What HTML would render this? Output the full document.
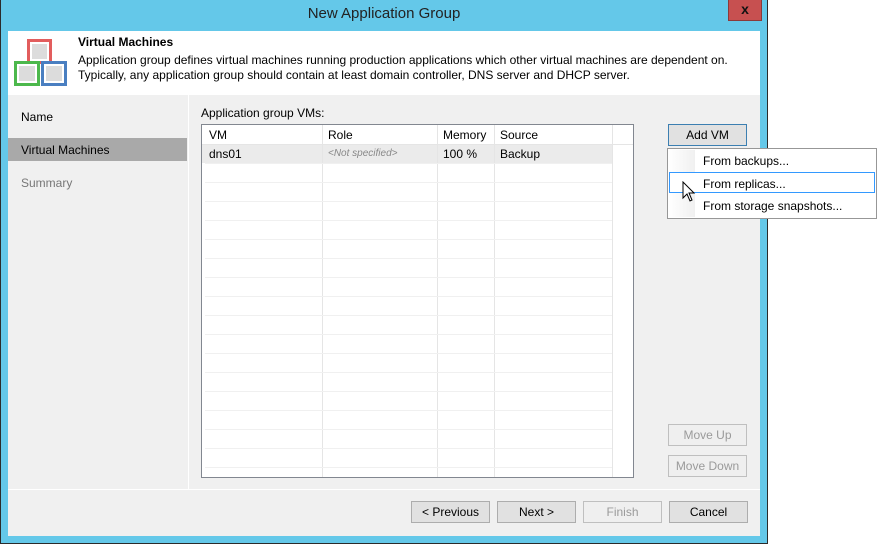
<!DOCTYPE html>
<html><head><style>
*{margin:0;padding:0;box-sizing:border-box}
body{width:877px;height:544px;background:#fff;position:relative;overflow:hidden;font-family:"Liberation Sans","DejaVu Sans",sans-serif;font-size:12px;color:#000}
.a{position:absolute}
.btn{position:absolute;height:22px;border:1px solid #adadad;background:#e1e1e1;text-align:center;line-height:20px;font-size:12px}
.dis{border-color:#bfbfbf;background:#efefef;color:#9a9a9a}
.hl{position:absolute;height:1px;background:#f0f0f0}
.vl{position:absolute;width:1px;background:#f0f0f0}
</style></head><body>
<div class="a" style="left:0;top:0;width:768px;height:544px;background:#2b2b2b"></div>
<div class="a" style="left:1px;top:0;width:766px;height:543px;background:#64c8e9"></div>
<div class="a" style="left:0;top:5px;width:768px;text-align:center;font-size:15px;color:#222">New Application Group</div>
<div class="a" style="left:728px;top:0;width:34px;height:21px;background:#c75050;border:1px solid #8b3a3a;border-top:none;color:#111;font-weight:bold;text-align:center;line-height:19px;font-size:14px">x</div>
<div class="a" style="left:8px;top:31px;width:752px;height:505px;background:#f0f0f0"></div>
<div class="a" style="left:8px;top:31px;width:752px;height:64px;background:#fff"></div>
<!-- icon -->
<div class="a" style="left:27px;top:39px;width:25px;height:25px;border:3px solid #e25d5d;background:#fff"><div style="margin:2px;width:15px;height:15px;background:#dcdcdc"></div></div>
<div class="a" style="left:14px;top:61px;width:26px;height:25px;border:3px solid #4cb84c;background:#fff"><div style="margin:2px;width:16px;height:15px;background:#dcdcdc"></div></div>
<div class="a" style="left:41px;top:61px;width:26px;height:25px;border:3px solid #4a7fc1;background:#fff"><div style="margin:2px;width:16px;height:15px;background:#dcdcdc"></div></div>
<div class="a" style="left:78px;top:35px;font-weight:bold">Virtual Machines</div>
<div class="a" style="left:78px;top:53px;line-height:15px">Application group defines virtual machines running production applications which other virtual machines are dependent on.<br>Typically, any application group should contain at least domain controller, DNS server and DHCP server.</div>
<!-- nav -->
<div class="a" style="left:188px;top:95px;width:1px;height:394px;background:#fff"></div>
<div class="a" style="left:8px;top:489px;width:752px;height:1px;background:#fff"></div>
<div class="a" style="left:21px;top:110px">Name</div>
<div class="a" style="left:8px;top:138px;width:179px;height:23px;background:#a9a9a9"></div>
<div class="a" style="left:21px;top:143px">Virtual Machines</div>
<div class="a" style="left:21px;top:176px;color:#777">Summary</div>
<div class="a" style="left:201px;top:106px">Application group VMs:</div>
<!-- table -->
<div class="a" style="left:201px;top:124px;width:433px;height:354px;border:1px solid #828790;background:#fff;overflow:hidden">
<div class="a" style="left:0;top:0;width:432px;height:20px;border-bottom:1px solid #e5e5e5"></div>
<div class="a" style="left:0;top:20px;width:410px;height:18px;background:#ebebeb"></div>
<div class="a" style="left:7px;top:3px">VM</div>
<div class="a" style="left:126px;top:3px">Role</div>
<div class="a" style="left:241px;top:3px">Memory</div>
<div class="a" style="left:298px;top:3px">Source</div>
<div class="a" style="left:7px;top:22px">dns01</div>
<div class="a" style="left:126px;top:23px;font-style:italic;font-size:10px;color:#888">&lt;Not specified&gt;</div>
<div class="a" style="left:241px;top:22px">100 %</div>
<div class="a" style="left:298px;top:22px">Backup</div>
<div class="vl" style="left:120px;top:0;height:354px;background:#e5e5e5"></div>
<div class="vl" style="left:235px;top:0;height:354px;background:#e5e5e5"></div>
<div class="vl" style="left:292px;top:0;height:354px;background:#e5e5e5"></div>
<div class="vl" style="left:410px;top:0;height:354px;background:#e5e5e5"></div>
<div id="rows"></div>
</div>
<script>
var r=document.getElementById('rows'),h='';
for(var y=38;y<354;y+=19)h+='<div class="hl" style="left:3px;top:'+y+'px;width:407px"></div>';
r.innerHTML=h;
</script>
<div class="btn" style="left:668px;top:124px;width:79px;border-color:#3c7fb1">Add VM</div>
<div class="btn dis" style="left:668px;top:424px;width:79px">Move Up</div>
<div class="btn dis" style="left:668px;top:455px;width:79px">Move Down</div>
<div class="btn" style="left:411px;top:501px;width:79px">&lt; Previous</div>
<div class="btn" style="left:497px;top:501px;width:79px">Next &gt;</div>
<div class="btn dis" style="left:583px;top:501px;width:79px">Finish</div>
<div class="btn" style="left:669px;top:501px;width:79px">Cancel</div>
<!-- menu -->
<div class="a" style="left:667px;top:148px;width:210px;height:71px;border:1px solid #979797;background:#fff">
<div class="a" style="left:1px;top:1px;width:26px;height:67px;background:linear-gradient(to right,#fff,#f0f0f0)"></div>
<div class="a" style="left:1px;top:23px;width:206px;height:21px;border:1px solid #3399ff;background:#fff"></div>
<div class="a" style="left:35px;top:5px">From backups...</div>
<div class="a" style="left:35px;top:28px">From replicas...</div>
<div class="a" style="left:35px;top:50px">From storage snapshots...</div>
</div>
<svg class="a" style="left:682px;top:181px" width="14" height="22" viewBox="0 0 14 22"><path d="M1 1 L1 17 L5 13 L8 20 L10 19 L7 12 L12 12 Z" fill="#fff" stroke="#000" stroke-width="1"/></svg>
</body></html>
